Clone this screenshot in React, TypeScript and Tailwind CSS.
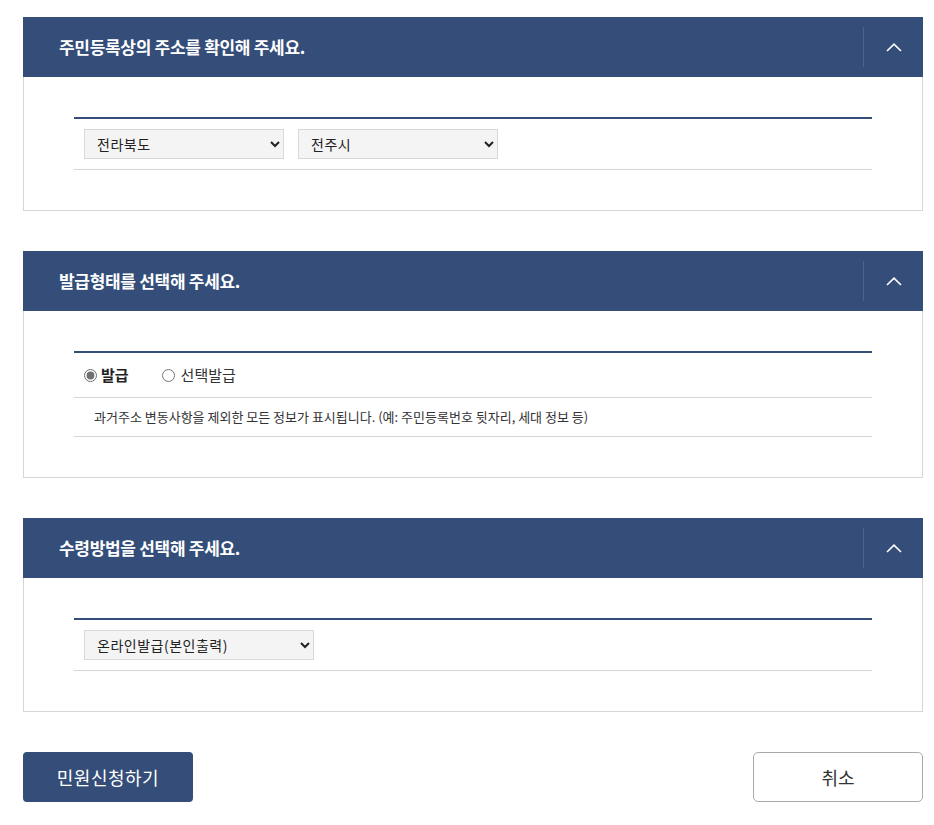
import { ReactNode } from "react";

const font = { fontFamily: '"Noto Sans CJK KR", "Noto Sans", sans-serif' };

function ChevronUp() {
  return (
    <svg width="16" height="9" viewBox="0 0 16 9" fill="none">
      <polyline points="1,8 8,1.2 15,8" stroke="white" strokeWidth="1.6" />
    </svg>
  );
}

function Panel({ title, children }: { title: string; children: ReactNode }) {
  return (
    <section className="w-[900px]">
      <div className="flex h-[60px] items-center bg-[#344d79]">
        <h2 className="flex-1 pl-[36px] text-[17px] font-bold tracking-[-0.3px] text-white">{title}</h2>
        <div className="h-[40px] border-l border-[#4c6390]" />
        <button className="flex h-full w-[59px] items-center justify-center">
          <ChevronUp />
        </button>
      </div>
      <div className="border-x border-b border-[#d6d6d6] px-[50px] py-[40px]">
        <div className="border-t-2 border-[#344d79]">{children}</div>
      </div>
    </section>
  );
}

function Select({ value, width }: { value: string; width: string }) {
  return (
    <select
      defaultValue={value}
      className={`${width} h-[30px] border border-[#d9d9d9] bg-[#f4f4f4] pl-[8px] pr-[6px] text-[14px] tracking-[0.5px] text-[#222]`}
    >
      <option>{value}</option>
    </select>
  );
}

export default function App() {
  return (
    <div className="min-h-[825px] bg-white pl-[23px] pt-[17px]" style={font}>
      <Panel title="주민등록상의 주소를 확인해 주세요.">
        <div className="flex gap-[14px] border-b border-[#d6d6d6] px-[10px] py-[10px]">
          <Select value="전라북도" width="w-[200px]" />
          <Select value="전주시" width="w-[200px]" />
        </div>
      </Panel>

      <div className="mt-[40px]">
        <Panel title="발급형태를 선택해 주세요.">
          <div className="flex h-[45px] items-center border-b border-[#d6d6d6] pl-[10px] text-[15px] text-[#333]">
            <label className="flex items-center gap-[4px]">
              <input type="radio" name="kind" defaultChecked className="m-0 h-[13px] w-[13px] accent-[#707070]" />
              <span className="font-bold text-[#222]">발급</span>
            </label>
            <label className="ml-[33px] flex items-center gap-[6px]">
              <input type="radio" name="kind" className="m-0 h-[13px] w-[13px] accent-[#707070]" />
              <span>선택발급</span>
            </label>
          </div>
          <div className="flex h-[39px] items-center border-b border-[#d6d6d6] pl-[20px] text-[13px] text-[#333]">
            과거주소 변동사항을 제외한 모든 정보가 표시됩니다. (예: 주민등록번호 뒷자리, 세대 정보 등)
          </div>
        </Panel>
      </div>

      <div className="mt-[40px]">
        <Panel title="수령방법을 선택해 주세요.">
          <div className="border-b border-[#d6d6d6] px-[10px] py-[10px]">
            <Select value="온라인발급(본인출력)" width="w-[230px]" />
          </div>
        </Panel>
      </div>

      <div className="mt-[40px] flex w-[900px] justify-between">
        <button className="h-[50px] w-[170px] rounded-[4px] bg-[#344d79] text-[18px] tracking-[0.5px] text-white">
          민원신청하기
        </button>
        <button className="h-[50px] w-[170px] rounded-[5px] border border-[#aaaaaa] bg-white text-[18px] text-[#333]">
          취소
        </button>
      </div>
    </div>
  );
}
